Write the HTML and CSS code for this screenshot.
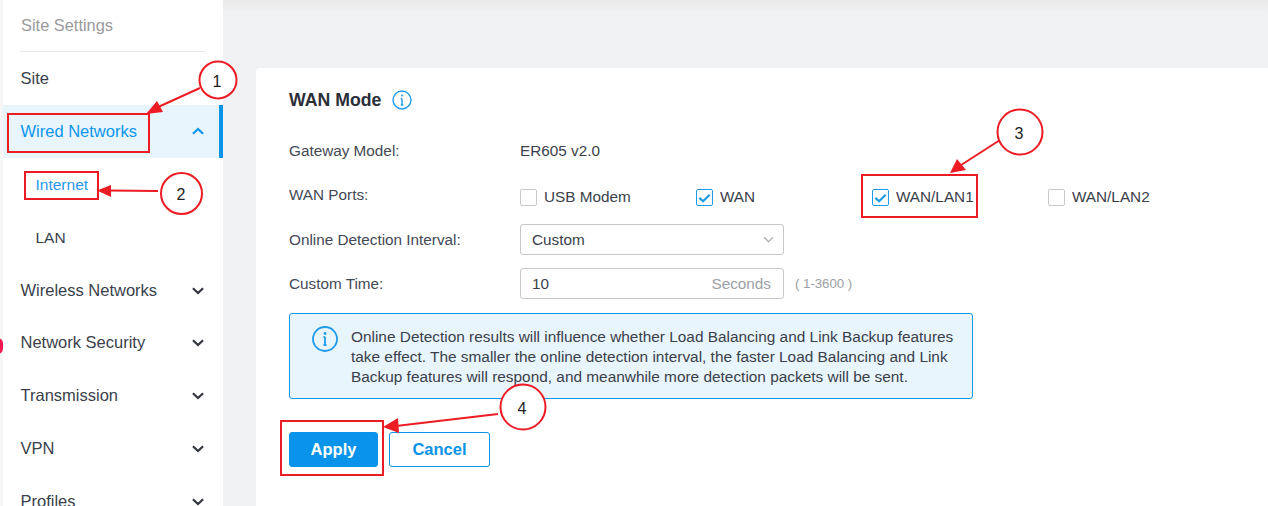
FILE: index.html
```html
<!DOCTYPE html>
<html lang="en">
<head>
<meta charset="utf-8">
<title>WAN Mode</title>
<link rel="stylesheet" href="styles.css">
</head>
<body>
<div class="page">
  <div class="edge"><span class="edge-dot"></span></div>
  <nav class="sidebar">
    <div class="side-title">Site Settings</div>
    <div class="nav-item">Site</div>
    <div class="nav-item active">Wired Networks
      <svg class="chev" viewBox="0 0 12 8"><path d="M1.5 6 6 1.8 10.500 6"/></svg>
    </div>
    <div class="nav-item sub current">Internet</div>
    <div class="nav-item sub">LAN</div>
    <div class="nav-item">Wireless Networks
      <svg class="chev" viewBox="0 0 12 8"><path d="M1.500 2 6 6.200 10.500 2"/></svg>
    </div>
    <div class="nav-item">Network Security
      <svg class="chev" viewBox="0 0 12 8"><path d="M1.500 2 6 6.200 10.500 2"/></svg>
    </div>
    <div class="nav-item">Transmission
      <svg class="chev" viewBox="0 0 12 8"><path d="M1.500 2 6 6.200 10.500 2"/></svg>
    </div>
    <div class="nav-item">VPN
      <svg class="chev" viewBox="0 0 12 8"><path d="M1.500 2 6 6.200 10.500 2"/></svg>
    </div>
    <div class="nav-item">Profiles
      <svg class="chev" viewBox="0 0 12 8"><path d="M1.500 2 6 6.200 10.500 2"/></svg>
    </div>
  </nav>
  <main class="content">
    <section class="card">
      <h2 class="card-title">WAN Mode
        <svg class="info-small" viewBox="0 0 20 20"><circle cx="10" cy="10" r="9"/><path d="M10 8.500V15M8.800 15h2.400M8.800 8.500H10"/><circle class="dot" cx="10" cy="5.500" r="1"/></svg>
      </h2>
      <div class="form-row model">
        <label class="form-label">Gateway Model:</label>
        <span class="value">ER605 v2.0</span>
      </div>
      <div class="form-row ports">
        <label class="form-label">WAN Ports:</label>
        <div class="checks">
          <span class="check"><i class="box"></i>USB Modem</span>
          <span class="check"><i class="box on"><svg viewBox="0 0 16 16"><path d="M2.500 8.500 6.500 12 13.500 5"/></svg></i>WAN</span>
          <span class="check"><i class="box on"><svg viewBox="0 0 16 16"><path d="M2.500 8.500 6.500 12 13.500 5"/></svg></i>WAN/LAN1</span>
          <span class="check"><i class="box"></i>WAN/LAN2</span>
        </div>
      </div>
      <div class="form-row interval">
        <label class="form-label">Online Detection Interval:</label>
        <div class="field select">Custom
          <svg class="select-chev" viewBox="0 0 12 8"><path d="M1 1.500 6 6.500 11 1.500"/></svg>
        </div>
      </div>
      <div class="form-row time">
        <label class="form-label">Custom Time:</label>
        <div class="field">10<span class="unit">Seconds</span></div>
        <span class="hint">( 1-3600 )</span>
      </div>
      <div class="notice">
        <svg class="info-big" viewBox="0 0 26 26"><circle cx="13" cy="13" r="12"/><path d="M13 11v8M11.500 19h3M11.500 11H13"/><circle class="dot" cx="13" cy="7.500" r="1.400"/></svg>
        <p>Online Detection results will influence whether Load Balancing and Link Backup features take effect. The smaller the online detection interval, the faster Load Balancing and Link Backup features will respond, and meanwhile more detection packets will be sent.</p>
      </div>
      <div class="actions">
        <button class="btn primary">Apply</button>
        <button class="btn ghost">Cancel</button>
      </div>
    </section>
  </main>
  <svg class="notes" viewBox="0 0 1268 506">
    <g class="frame">
      <rect x="8" y="114" width="141" height="38"/>
      <rect x="25" y="172" width="73" height="27"/>
      <rect x="862" y="175" width="115" height="42"/>
      <rect x="281" y="421" width="102" height="54"/>
    </g>
    <g class="lead">
      <path d="M200 88 156 108"/>
      <path d="M158 191 108 190.500"/>
      <path d="M1000 140 958 167"/>
      <path d="M498 414 396 426"/>
    </g>
    <g class="head">
      <path d="M146 114 157 101 163 112Z"/>
      <path d="M97 190.500 111 185 111 197Z"/>
      <path d="M950 173 957 159 966 170Z"/>
      <path d="M383 427 398 418 399 433Z"/>
    </g>
    <g class="ring">
      <circle cx="218" cy="80" r="18.500"/>
      <circle cx="181.500" cy="193.500" r="20.500"/>
      <circle cx="1020" cy="132" r="22.500"/>
      <circle cx="523" cy="407" r="22.500"/>
    </g>
    <g class="num">
      <text x="217" y="87">1</text>
      <text x="181" y="200">2</text>
      <text x="1019" y="139">3</text>
      <text x="522" y="414">4</text>
    </g>
  </svg>
</div>
</body>
</html>
```
FILE: styles.css
```css
* { box-sizing: border-box; }
html, body { margin: 0; height: 100%; }
body {
  font-family: "Liberation Sans", Arial, sans-serif;
  color: #3a3f4b;
  overflow: hidden;
}
.page {
  position: relative;
  display: flex;
  width: 1268px;
  height: 506px;
  overflow: hidden;
  background: linear-gradient(#e9e9e9 0, #f1f2f4 12px);
}
.edge {
  position: relative;
  flex: 0 0 3px;
  background: #f6f6f6;
}
.edge-dot {
  position: absolute;
  left: -8px;
  top: 338px;
  width: 11px;
  height: 16px;
  border-radius: 8px;
  background: #f5174f;
}
.sidebar {
  flex: 0 0 220px;
  height: 506px;
  overflow: hidden;
  background: #fff;
}
.side-title {
  height: 52px;
  margin: 0 18px 0 17px;
  padding: 16px 0 0 1px;
  font-size: 16.400px;
  line-height: 18px;
  color: #9a9a9a;
  border-bottom: 1px solid #e8e8e8;
}
.nav-item {
  display: flex;
  align-items: center;
  justify-content: space-between;
  height: 52.800px;
  padding: 1px 18px 0 17.500px;
  font-size: 16.500px;
  color: #3a3f4b;
}
.nav-item.active {
  background: #e9f5fc;
  color: #0d96ee;
  border-right: 4px solid #0a93ea;
  padding-right: 14px;
}
.nav-item.sub { padding: 3px 18px 0 32.500px; font-size: 15.500px; }
.nav-item.current { color: #2a97ee; }
.chev {
  width: 14px;
  height: 9px;
  fill: none;
  stroke: #33373f;
  stroke-width: 2;
}
.active .chev { stroke: #0d96ee; }
.content {
  flex: 1;
  padding: 68px 0 0 33px;
}
.card {
  height: 500px;
  background: #fff;
  border-radius: 4px 0 0 0;
  padding: 21px 33px;
}
.card-title {
  display: flex;
  align-items: center;
  gap: 11px;
  margin: 0;
  height: 22px;
  font-size: 17.700px;
  font-weight: 700;
  color: #2b2f38;
}
.info-small { width: 20px; height: 20px; }
.info-small circle, .info-small path,
.info-big circle, .info-big path {
  fill: none;
  stroke: #1f9bee;
  stroke-width: 1.400;
}
.info-big circle, .info-big path { stroke-width: 1.800; }
.info-small .dot, .info-big .dot { fill: #1f9bee; stroke: none; }
.form-row {
  display: flex;
  align-items: center;
  font-size: 15.300px;
}
.form-label { flex: 0 0 231px; color: #444955; }
.model { margin-top: 29px; height: 22px; }
.value { color: #3a3f4b; }
.ports { margin-top: 24px; height: 22px; }
.ports .form-label { position: relative; top: -2px; }
.checks { display: flex; }
.check {
  display: flex;
  align-items: center;
  flex: 0 0 176px;
  gap: 7px;
  color: #3a3f4b;
}
.box {
  display: block;
  width: 17px;
  height: 17px;
  border: 1px solid #c9c9c9;
  border-radius: 2px;
  background: #fff;
}
.box.on { border-color: #1f9bee; }
.box svg {
  display: block;
  width: 15px;
  height: 15px;
  fill: none;
  stroke: #1f9bee;
  stroke-width: 2.400;
}
.interval { margin-top: 16px; height: 31px; }
.time { margin-top: 13px; height: 31px; }
.field {
  display: flex;
  align-items: center;
  justify-content: space-between;
  width: 264px;
  height: 31px;
  padding: 0 12px 0 11px;
  border: 1px solid #c8c8c8;
  border-radius: 3px;
  color: #3a3f4b;
}
.field.select { padding-right: 9px; }
.select-chev {
  width: 11px;
  height: 7px;
  fill: none;
  stroke: #b5b5b5;
  stroke-width: 1.800;
}
.unit { color: #9a9ea6; }
.hint { margin-left: 11px; font-size: 13.200px; color: #9a9ea6; }
.notice {
  display: flex;
  gap: 13px;
  width: 684px;
  height: 86px;
  margin-top: 14px;
  padding: 13px 12px 0 22px;
  background: #e9f5fc;
  border: 1px solid #1a96e8;
  border-radius: 3px;
}
.info-big { flex: 0 0 26px; width: 26px; height: 26px; margin-top: -1px; }
.notice p {
  margin: 0;
  font-size: 15.400px;
  line-height: 20px;
  color: #3a3f4b;
}
.actions {
  display: flex;
  gap: 11px;
  margin-top: 33px;
}
.btn {
  height: 35px;
  border-radius: 3px;
  font: 700 16.500px "Liberation Sans", Arial, sans-serif;
}
.primary {
  width: 89px;
  background: #0a93ea;
  border: 1px solid #0a93ea;
  color: #fff;
}
.ghost {
  width: 101px;
  background: #fff;
  border: 1px solid #0a93ea;
  color: #0a93ea;
}
.notes {
  position: absolute;
  left: 0;
  top: 0;
  width: 1268px;
  height: 506px;
  pointer-events: none;
}
.frame rect { fill: none; stroke: #ed1c24; stroke-width: 2; }
.lead path { fill: none; stroke: #ed1c24; stroke-width: 2; }
.head path { fill: #ed1c24; }
.ring circle { fill: #fff; stroke: #ed1c24; stroke-width: 2; }
.num text {
  font-family: "Liberation Sans", Arial, sans-serif;
  font-size: 16px;
  text-anchor: middle;
  fill: #222;
}
```
